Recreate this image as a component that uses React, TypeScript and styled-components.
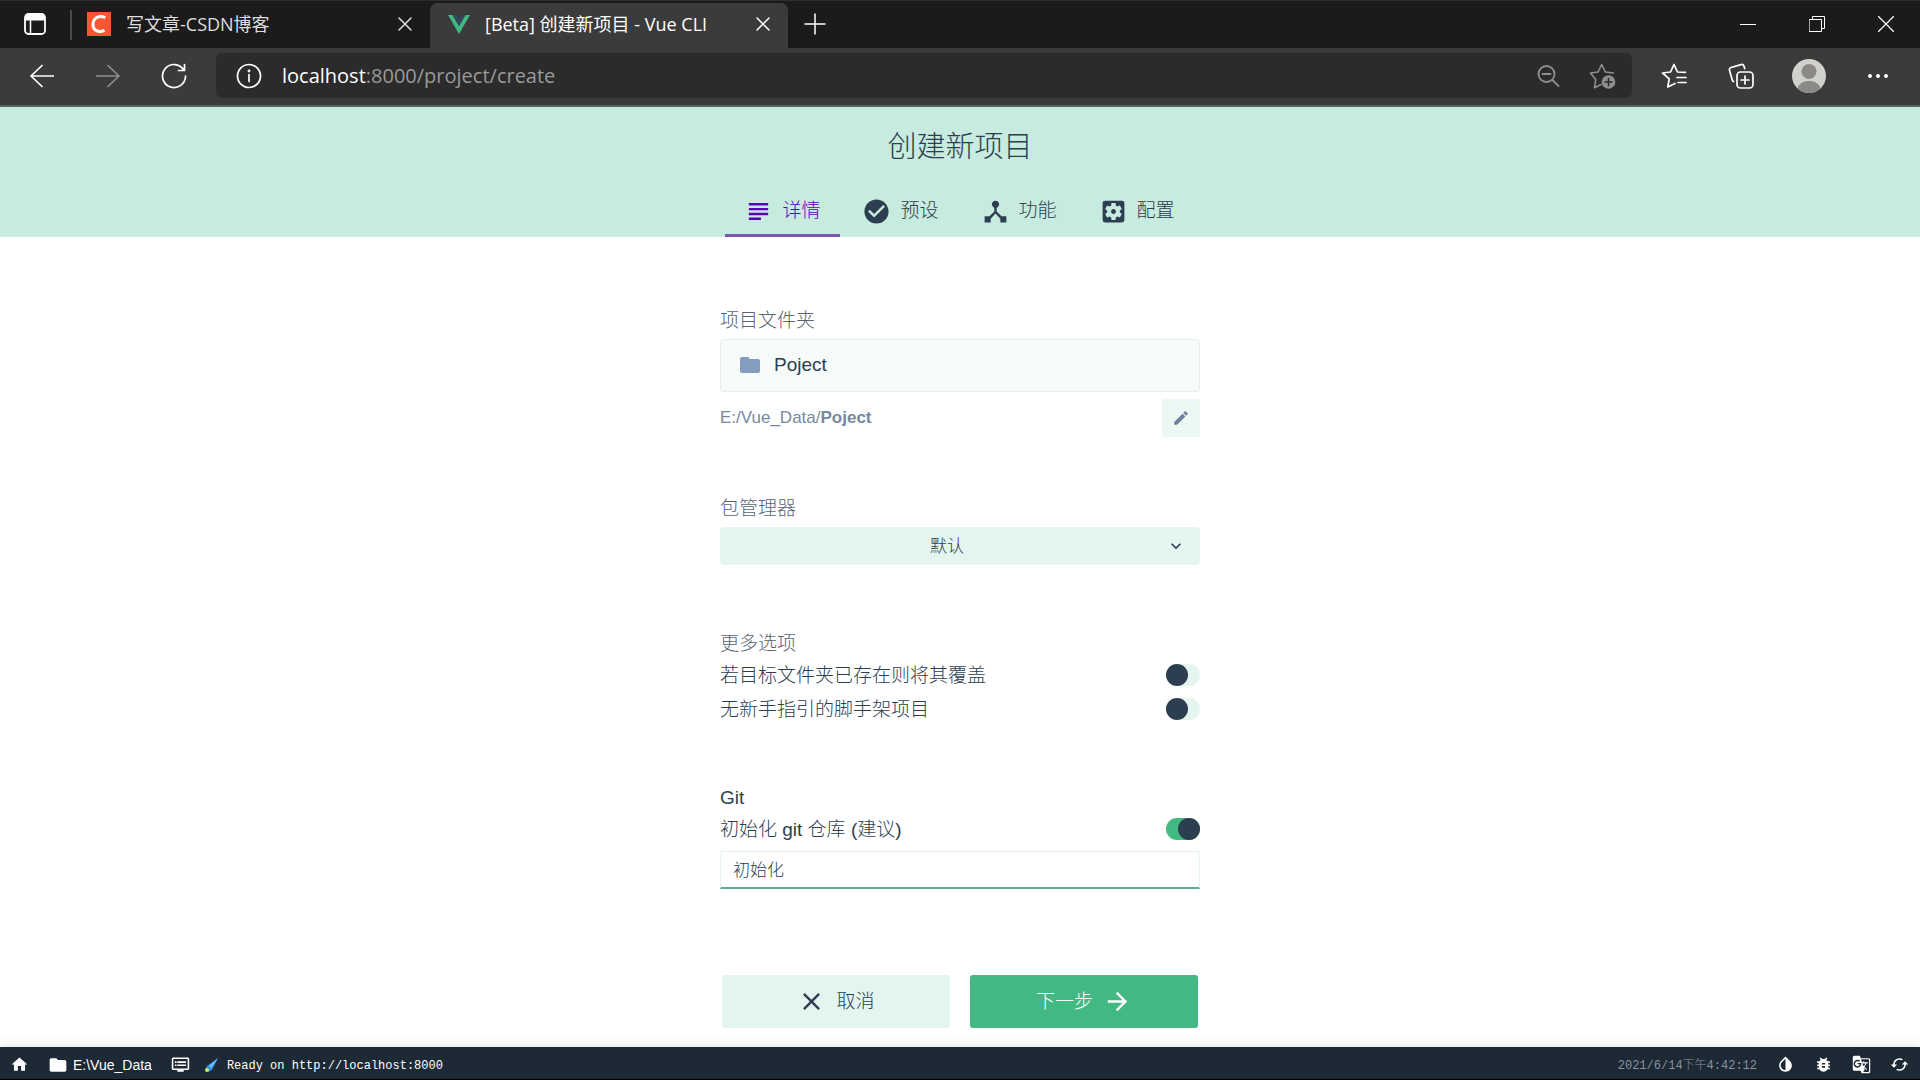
import React, { useState } from 'react';
import styled, { createGlobalStyle, css } from 'styled-components';
import {
  MdSubject,
  MdCheckCircle,
  MdDeviceHub,
  MdSettingsApplications,
  MdFolder,
  MdEdit,
  MdKeyboardArrowDown,
  MdClose,
  MdArrowForward,
  MdHome,
  MdDvr,
  MdInvertColors,
  MdBugReport,
  MdGTranslate,
  MdCached,
} from 'react-icons/md';

const uiFont = '"Open Sans", "Noto Sans CJK SC", sans-serif';
const pageFont = '"Liberation Sans", "Noto Sans CJK SC", sans-serif';
const monoFont = '"Liberation Mono", "Noto Sans CJK SC", monospace';

const ink = '#2c3e50';
const mint = '#e4f5ef';
const green = '#42b983';

const GlobalStyle = createGlobalStyle`
  *, *::before, *::after { box-sizing: border-box; }
  body { margin: 0; background: #fff; }
  button, input, select { font: inherit; color: inherit; margin: 0; padding: 0; border: 0; background: none; }
  button { cursor: pointer; }
`;

const Screen = styled.div`
  display: flex;
  flex-direction: column;
  min-height: 100vh;
  font-family: ${pageFont};
  font-size: 19px;
  font-weight: 300;
  line-height: 24px;
  color: ${ink};
`;

/* ---------- browser chrome ---------- */

const TabStrip = styled.div`
  display: flex;
  height: 48px;
  padding-top: 2px;
  background: #1b1b1b;
  border-top: 1px solid #2c2c2c;
  color: #fff;
  font-family: ${uiFont};
  font-weight: 400;
`;

const StripButton = styled.button<{ $width: number }>`
  display: flex;
  align-items: center;
  justify-content: center;
  width: ${(p) => p.$width}px;
  height: 42px;
`;

const Separator = styled.span`
  width: 2px;
  height: 30px;
  margin-top: 7px;
  background: #4a4a4a;
`;

const BrowserTab = styled.div<{ $active?: boolean }>`
  display: flex;
  align-items: center;
  gap: 15px;
  width: 358px;
  padding: 0 10px 3px 15px;
  font-size: 18px;
  color: #dedede;
  ${(p) =>
    p.$active &&
    css`
      padding-left: 18px;
      background: #3b3b3b;
      border-radius: 7px 7px 0 0;
      color: #fff;
    `}
`;

const TabTitle = styled.span`
  flex: 1;
  white-space: nowrap;
  overflow: hidden;
`;

const CloseTab = styled.button`
  display: flex;
  align-items: center;
  justify-content: center;
  width: 30px;
  height: 30px;
`;

const WindowButtons = styled.div`
  display: flex;
  margin-left: auto;
`;

const Toolbar = styled.div`
  display: flex;
  align-items: center;
  height: 59px;
  padding: 0 8px 2px 9px;
  background: #3b3b3b;
  border-bottom: 2px solid #56645f;
  color: #fff;
`;

const ToolButton = styled.button<{ $dim?: boolean; $width?: number }>`
  display: flex;
  align-items: center;
  justify-content: center;
  flex: none;
  width: ${(p) => p.$width ?? 66}px;
  height: 44px;
  color: ${(p) => (p.$dim ? '#8f8f8f' : '#fff')};
`;

const AddressBar = styled.div`
  display: flex;
  align-items: center;
  flex: 1;
  height: 45px;
  margin: 0 8px 0 9px;
  padding: 0 2px 0 20px;
  border-radius: 6px;
  background: #2b2b2b;
`;

const Address = styled.span`
  flex: 1;
  margin-left: 20px;
  font-family: ${uiFont};
  font-size: 20px;
  font-weight: 400;
  color: #9a9a9a;
`;

const Host = styled.span`
  color: #fff;
`;

/* ---------- page header ---------- */

const Header = styled.header`
  display: flex;
  flex-direction: column;
  align-items: center;
  background: #c8ebdf;
`;

const Title = styled.h1`
  margin: 0;
  padding-top: 2px;
  font-size: 29px;
  font-weight: 300;
  line-height: 76px;
`;

const Steps = styled.nav`
  display: flex;
  gap: 3px;
`;

const Step = styled.button<{ $active?: boolean }>`
  display: flex;
  align-items: center;
  gap: 9px;
  height: 52px;
  padding: 3px 20px 0 19px;
  border-bottom: 3px solid ${(p) => (p.$active ? '#7e57b5' : 'transparent')};
  color: ${(p) => (p.$active ? '#5e00b8' : ink)};
`;

/* ---------- form ---------- */

const Main = styled.main`
  display: flex;
  flex: 1;
  flex-direction: column;
  align-items: center;
  padding: 71px 20px 19px;
`;

const Form = styled.form`
  display: flex;
  flex: 1;
  flex-direction: column;
  gap: 59px;
  width: 100%;
  max-width: 480px;
`;

const Field = styled.section<{ $gap: number; $hint?: boolean }>`
  display: flex;
  flex-direction: column;
  gap: ${(p) => p.$gap}px;
  padding-bottom: ${(p) => (p.$hint ? 7 : 0)}px;
`;

const FieldLabel = styled.label<{ $strong?: boolean }>`
  height: 24px;
  padding-top: 1px;
  color: ${(p) => (p.$strong ? ink : '#586472')};
`;

const GroupTitle = styled(FieldLabel).attrs({ as: 'div' })``;

const FolderBox = styled.button`
  display: flex;
  align-items: center;
  gap: 12px;
  height: 53px;
  padding: 0 17px 2px;
  border: 1px solid #e4f0ee;
  border-radius: 3px;
  background: #f6fbfa;
`;

const PathRow = styled.div`
  display: flex;
  align-items: center;
  justify-content: space-between;
  font-size: 17px;
  color: #75899f;
`;

const PathText = styled.span`
  font-weight: 400;
`;

const EditButton = styled.button`
  display: flex;
  align-items: center;
  justify-content: center;
  width: 38px;
  height: 38px;
  border-radius: 3px;
  background: #ebf8f4;
  color: #6a809b;
`;

const SelectBox = styled.div`
  position: relative;
`;

const Select = styled.select`
  display: block;
  width: 100%;
  height: 38px;
  padding: 2px 38px 0 12px;
  border-radius: 4px;
  background: ${mint};
  appearance: none;
  font-size: 17px;
  text-align-last: center;
`;

const SelectArrow = styled.span`
  position: absolute;
  top: 9px;
  right: 14px;
  display: flex;
  pointer-events: none;
`;

const SwitchRow = styled.label`
  display: flex;
  align-items: center;
  justify-content: space-between;
  height: 34px;
  cursor: pointer;
`;

const SwitchText = styled.span`
  padding-top: 2px;
`;

const Switch = styled.input`
  display: flex;
  width: 34px;
  height: 22px;
  border-radius: 11px;
  background: ${mint};
  appearance: none;
  cursor: pointer;

  &::before {
    content: '';
    width: 22px;
    height: 22px;
    border-radius: 50%;
    background: ${ink};
  }

  &:checked {
    justify-content: flex-end;
    background: ${green};
  }
`;

const TextInput = styled.input`
  height: 38px;
  margin-top: 2px;
  padding: 0 12px 2px;
  border: 1px solid #e4f3ef;
  border-bottom: 2px solid #56b08a;
  border-radius: 3px 3px 0 0;
  font-size: 17px;
  outline: none;
`;

const Actions = styled.div`
  display: grid;
  grid-template-columns: 1fr 1fr;
  gap: 20px;
  margin-top: auto;
  padding: 0 2px;
`;

const ActionButton = styled.button<{ $primary?: boolean }>`
  display: flex;
  align-items: center;
  justify-content: center;
  gap: 10px;
  height: 53px;
  border-radius: 3px;
  background: ${(p) => (p.$primary ? green : mint)};
  color: ${(p) => (p.$primary ? '#fff' : ink)};
`;

/* ---------- status bar ---------- */

const StatusBar = styled.footer`
  display: flex;
  align-items: center;
  height: 33px;
  padding: 3px 1px 0;
  border-bottom: 1px solid #000;
  background: #1d2935;
  box-shadow: 0 -2px 10px rgba(0, 0, 0, 0.1);
  color: #fff;
`;

const StatusItem = styled.button`
  display: flex;
  align-items: center;
  justify-content: center;
  gap: 5px;
  height: 29px;
  padding: 0 10px 0 9px;
  font-size: 14px;
  font-weight: 400;
`;

const LogLine = styled.button`
  display: flex;
  align-items: center;
  gap: 8px;
  padding: 2px 0 0 4px;
  font-family: ${monoFont};
  font-size: 12px;
  font-weight: 400;
`;

const Clock = styled.time`
  margin-left: auto;
  padding: 2px 10px 0 0;
  font-family: ${monoFont};
  font-size: 12px;
  color: #8893a0;
`;

/* ---------- drawings ---------- */

type LineProps = { size: number; box?: number; width?: number; children: React.ReactNode };

const Line = ({ size, box = size, width = 2, children }: LineProps) => (
  <svg
    width={size}
    height={size}
    viewBox={`0 0 ${box} ${box}`}
    fill="none"
    stroke="currentColor"
    strokeWidth={width}
    strokeLinecap="round"
    strokeLinejoin="round"
    aria-hidden="true"
  >
    {children}
  </svg>
);

const Cross = ({ size }: { size: number }) => (
  <Line size={size} box={14} width={1.5}>
    <path d="M1 1l12 12M13 1L1 13" />
  </Line>
);

const CsdnLogo = () => (
  <svg width="24" height="24" viewBox="0 0 24 24" fill="none" aria-hidden="true">
    <rect width="24" height="24" fill="#fc5531" />
    <path d="M18.3 5.6C12 2.6 6 6 6 12.6c0 6 5.5 8.400 11.500 5.700" stroke="#fff" strokeWidth="3" />
  </svg>
);

const VueLogo = () => (
  <svg width="22" height="20" viewBox="0 0 22 20" aria-hidden="true">
    <path d="M0 1h4.500L11 12l6.500-11H22L11 20z" fill="#41b883" />
    <path d="M4.500 1h4L11 5l2.500-4h4L11 12z" fill="#35495e" />
  </svg>
);

const Comet = () => (
  <svg width="15" height="15" viewBox="0 0 15 15" aria-hidden="true">
    <path d="M14 0L3 8 1 12l3 2 4-2z" fill="#2f8fe0" />
    <path d="M14 0L5 8l2 2z" fill="#7cc0f5" />
    <circle cx="3" cy="12" r="2" fill="#d8e25a" />
  </svg>
);

const steps = [
  { name: '详情', Icon: MdSubject },
  { name: '预设', Icon: MdCheckCircle },
  { name: '功能', Icon: MdDeviceHub },
  { name: '配置', Icon: MdSettingsApplications },
];

function BrowserChrome() {
  return (
    <>
      <TabStrip>
        <StripButton $width={70} aria-label="标签页操作">
          <Line size={22} width={1.8}>
            <rect x="1" y="1" width="20" height="20" rx="3.500" />
            <path d="M2 2.500h18v4H2z" fill="currentColor" />
            <path d="M6.500 7v13" strokeWidth="1.500" />
          </Line>
        </StripButton>
        <Separator />
        <BrowserTab>
          <CsdnLogo />
          <TabTitle>写文章-CSDN博客</TabTitle>
          <CloseTab aria-label="关闭标签页">
            <Cross size={14} />
          </CloseTab>
        </BrowserTab>
        <BrowserTab $active>
          <VueLogo />
          <TabTitle>[Beta] 创建新项目 - Vue CLI</TabTitle>
          <CloseTab aria-label="关闭标签页">
            <Cross size={14} />
          </CloseTab>
        </BrowserTab>
        <StripButton $width={54} aria-label="新建标签页">
          <Line size={22} width={1.5}>
            <path d="M11 1v20M1 11h20" />
          </Line>
        </StripButton>
        <WindowButtons>
          <StripButton $width={69} aria-label="最小化">
            <Line size={16} width={1}>
              <path d="M0 8.500h16" />
            </Line>
          </StripButton>
          <StripButton $width={69} aria-label="还原">
            <Line size={16} width={1}>
              <path d="M.5 3.500h12v12H.5zM3.500 3.500v-3h12v12h-3" />
            </Line>
          </StripButton>
          <StripButton $width={69} aria-label="关闭">
            <Line size={16} width={1.2}>
              <path d="M.5.5l15 15M15.500.5l-15 15" />
            </Line>
          </StripButton>
        </WindowButtons>
      </TabStrip>
      <Toolbar>
        <ToolButton aria-label="后退">
          <Line size={24} width={1.7}>
            <path d="M23.500 12H1M12 1.500L1 12l11 10.500" />
          </Line>
        </ToolButton>
        <ToolButton $dim aria-label="前进">
          <Line size={24} width={1.7}>
            <path d="M.5 12H23M12 1.500L23 12 12 22.500" />
          </Line>
        </ToolButton>
        <ToolButton aria-label="刷新">
          <Line size={26} width={1.7}>
            <path d="M22.800 7A11.500 11.500 0 1 0 24.500 13M23.500 1.500v6h-6" />
          </Line>
        </ToolButton>
        <AddressBar>
          <Line size={26} width={1.7}>
            <circle cx="13" cy="13" r="11.500" />
            <path d="M13 11.500v7" />
            <circle cx="13" cy="8" r=".6" />
          </Line>
          <Address>
            <Host>localhost</Host>:8000/project/create
          </Address>
          <ToolButton $dim $width={55} aria-label="缩放">
            <Line size={24} width={1.8}>
              <circle cx="10.500" cy="10" r="8" />
              <path d="M6.500 10h8M16.500 16l6 6" />
            </Line>
          </ToolButton>
          <ToolButton $dim $width={55} aria-label="添加到收藏夹">
            <Line size={28} width={1.6}>
              <path d="M12 22.500l-6.500 3.200 1.300-8L1.500 11l7.500-1 3.700-7.500L16.400 10l8 1" />
              <circle cx="19.500" cy="20" r="6" fill="currentColor" />
              <path d="M19.500 16.500v7M16 20h7" stroke="#2b2b2b" />
            </Line>
          </ToolButton>
        </AddressBar>
        <ToolButton $width={68} aria-label="收藏夹">
          <Line size={26} width={1.7}>
            <path d="M14 20.500l-7.200 3.500 1.400-8.200L1.500 10l8-1L13 1.500 16.500 9l8 .3M16 14.500h9M17 19.500h8" />
          </Line>
        </ToolButton>
        <ToolButton $width={66} aria-label="集锦">
          <Line size={26} width={1.7}>
            <rect x="9" y="9" width="16" height="16" rx="3.500" />
            <path d="M17 13v8M13 17h8M5.500 18.500l-1-.8L1.500 7.500A2.500 2.500 0 0 1 3 4.500L13 1.600a2.500 2.500 0 0 1 3 1.500l.7 2.500" />
          </Line>
        </ToolButton>
        <ToolButton $width={70} aria-label="用户">
          <svg width="34" height="34" viewBox="0 0 34 34" aria-hidden="true">
            <circle cx="17" cy="17" r="17" fill="#d2d0cd" />
            <circle cx="17" cy="12.500" r="7.500" fill="#8c8a88" />
            <path d="M5.500 29.500C7 24.500 11 22 17 22s10 2.500 11.500 7.500A17 17 0 0 1 5.500 29.500z" fill="#8c8a88" />
          </svg>
        </ToolButton>
        <ToolButton $width={68} aria-label="设置及其他">
          <svg width="22" height="6" viewBox="0 0 22 6" fill="currentColor" aria-hidden="true">
            <circle cx="3" cy="3" r="2" />
            <circle cx="11" cy="3" r="2" />
            <circle cx="19" cy="3" r="2" />
          </svg>
        </ToolButton>
      </Toolbar>
    </>
  );
}

export default function App() {
  const [step, setStep] = useState(0);
  const [force, setForce] = useState(false);
  const [bare, setBare] = useState(false);
  const [git, setGit] = useState(true);
  const [message, setMessage] = useState('初始化');

  return (
    <Screen>
      <GlobalStyle />
      <BrowserChrome />
      <Header>
        <Title>创建新项目</Title>
        <Steps>
          {steps.map(({ name, Icon }, i) => (
            <Step key={name} $active={i === step} onClick={() => setStep(i)}>
              <Icon size={29} />
              {name}
            </Step>
          ))}
        </Steps>
      </Header>
      <Main>
        <Form onSubmit={(e) => e.preventDefault()}>
          <Field $gap={7}>
            <FieldLabel htmlFor="folder">项目文件夹</FieldLabel>
            <FolderBox id="folder" type="button">
              <MdFolder size={24} color="#839cbf" />
              Poject
            </FolderBox>
            <PathRow>
              <PathText>
                E:/Vue_Data/<b>Poject</b>
              </PathText>
              <EditButton type="button" aria-label="编辑">
                <MdEdit size={18} />
              </EditButton>
            </PathRow>
          </Field>

          <Field $gap={7} $hint>
            <FieldLabel htmlFor="manager">包管理器</FieldLabel>
            <SelectBox>
              <Select id="manager">
                <option>默认</option>
              </Select>
              <SelectArrow>
                <MdKeyboardArrowDown size={20} />
              </SelectArrow>
            </SelectBox>
          </Field>

          <Field $gap={3}>
            <GroupTitle>更多选项</GroupTitle>
            <div>
              <SwitchRow>
                <SwitchText>若目标文件夹已存在则将其覆盖</SwitchText>
                <Switch type="checkbox" checked={force} onChange={() => setForce(!force)} />
              </SwitchRow>
              <SwitchRow>
                <SwitchText>无新手指引的脚手架项目</SwitchText>
                <Switch type="checkbox" checked={bare} onChange={() => setBare(!bare)} />
              </SwitchRow>
            </div>
          </Field>

          <Field $gap={3}>
            <GroupTitle $strong>Git</GroupTitle>
            <SwitchRow>
              <SwitchText>初始化 git 仓库 (建议)</SwitchText>
              <Switch type="checkbox" checked={git} onChange={() => setGit(!git)} />
            </SwitchRow>
            <TextInput
              aria-label="初始提交信息"
              value={message}
              onChange={(e) => setMessage(e.target.value)}
            />
          </Field>

          <Actions>
            <ActionButton type="button">
              <MdClose size={29} />
              取消
            </ActionButton>
            <ActionButton type="submit" $primary>
              下一步
              <MdArrowForward size={29} />
            </ActionButton>
          </Actions>
        </Form>
      </Main>
      <StatusBar>
        <StatusItem aria-label="主页">
          <MdHome size={19} />
        </StatusItem>
        <StatusItem>
          <MdFolder size={20} />
          E:\Vue_Data
        </StatusItem>
        <StatusItem aria-label="日志">
          <MdDvr size={19} />
        </StatusItem>
        <LogLine>
          <Comet />
          Ready on http://localhost:8000
        </LogLine>
        <Clock>2021/6/14下午4:42:12</Clock>
        <StatusItem aria-label="切换主题">
          <MdInvertColors size={19} />
        </StatusItem>
        <StatusItem aria-label="报告问题">
          <MdBugReport size={19} />
        </StatusItem>
        <StatusItem aria-label="翻译">
          <MdGTranslate size={19} />
        </StatusItem>
        <StatusItem aria-label="重新加载">
          <MdCached size={19} />
        </StatusItem>
      </StatusBar>
    </Screen>
  );
}
